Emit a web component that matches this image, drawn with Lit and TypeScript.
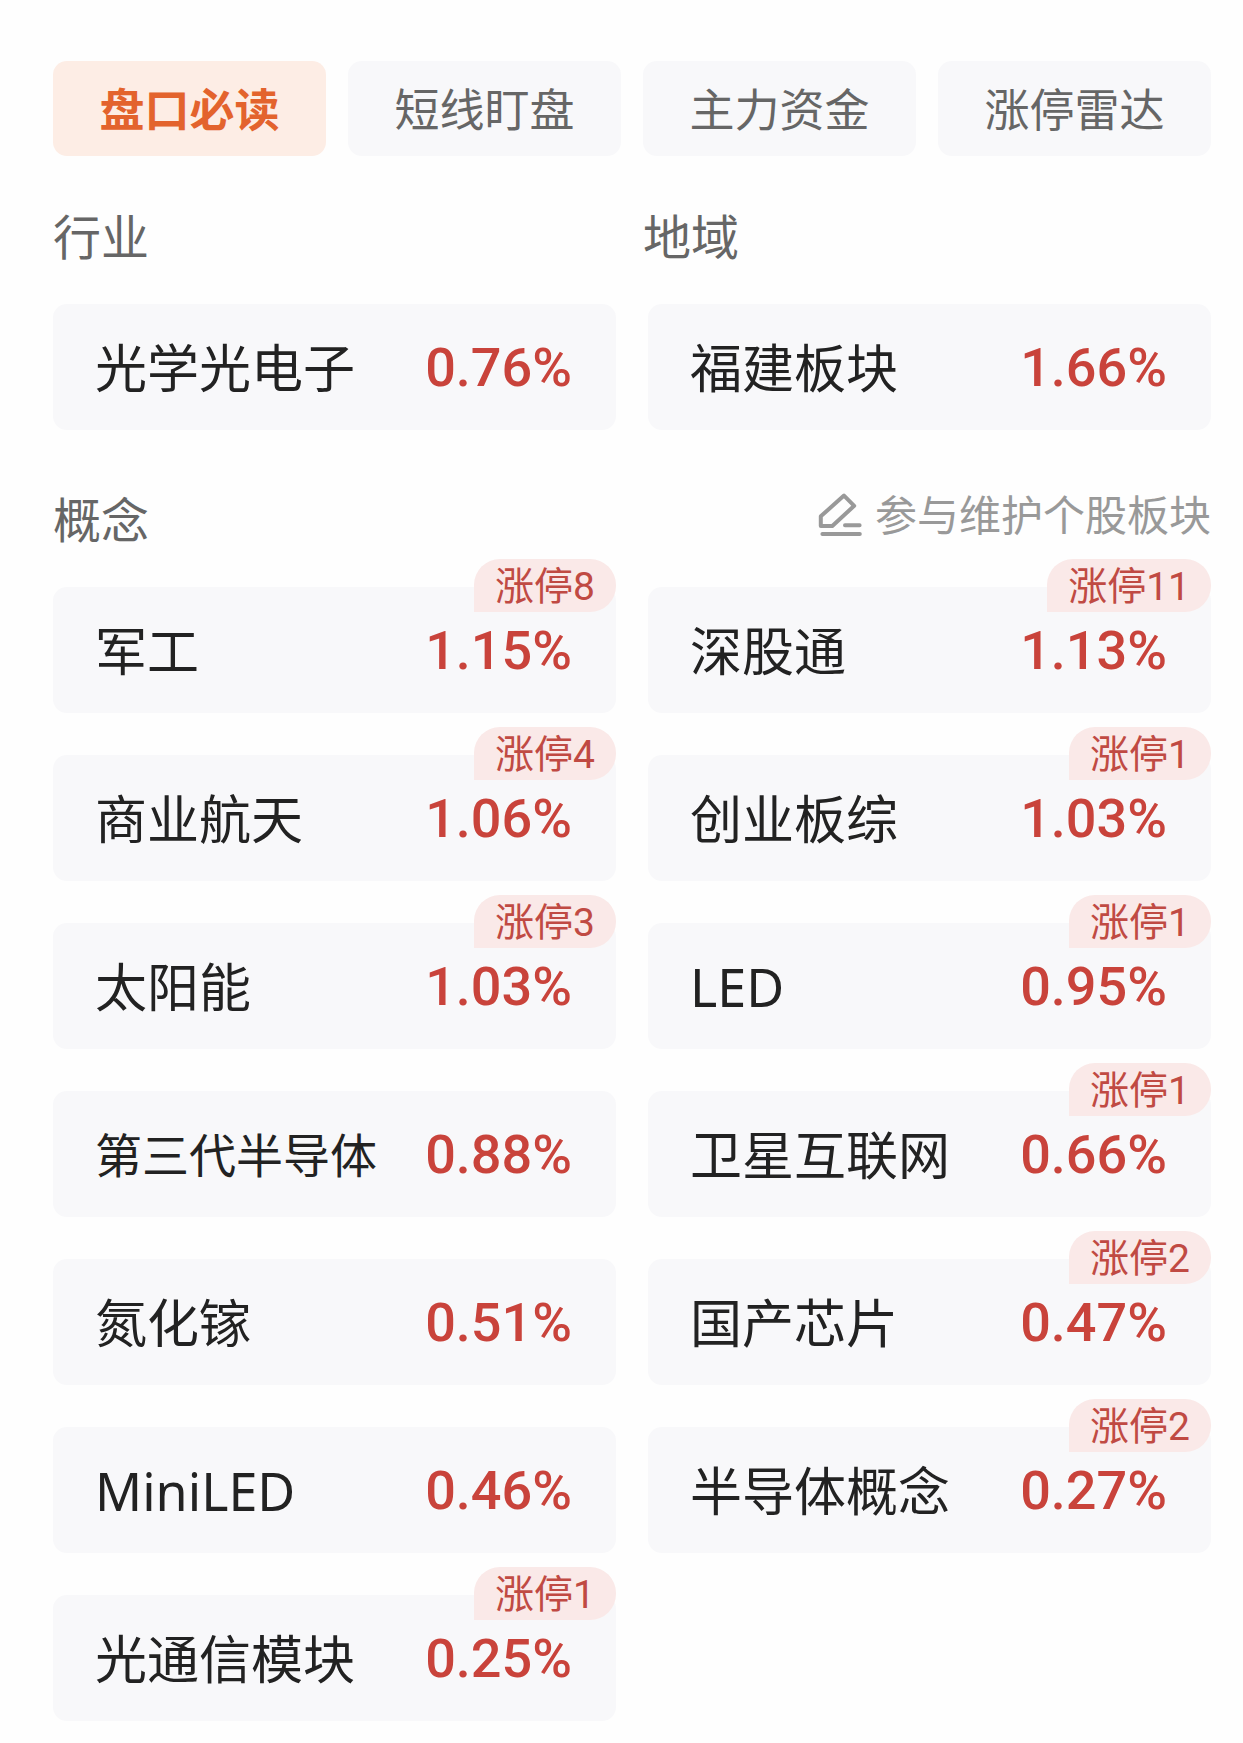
import { LitElement, html, css, nothing } from "lit";
import { customElement, property, state } from "lit/decorators.js";
import { classMap } from "lit/directives/class-map.js";

interface Sector {
  name: string;
  change: string;
  limitUps?: number;
}

const TABS = ["盘口必读", "短线盯盘", "主力资金", "涨停雷达"];

const INDUSTRY: Sector = { name: "光学光电子", change: "0.76%" };
const REGION: Sector = { name: "福建板块", change: "1.66%" };

const CONCEPTS: Sector[] = [
  { name: "军工", change: "1.15%", limitUps: 8 },
  { name: "深股通", change: "1.13%", limitUps: 11 },
  { name: "商业航天", change: "1.06%", limitUps: 4 },
  { name: "创业板综", change: "1.03%", limitUps: 1 },
  { name: "太阳能", change: "1.03%", limitUps: 3 },
  { name: "LED", change: "0.95%", limitUps: 1 },
  { name: "第三代半导体", change: "0.88%" },
  { name: "卫星互联网", change: "0.66%", limitUps: 1 },
  { name: "氮化镓", change: "0.51%" },
  { name: "国产芯片", change: "0.47%", limitUps: 2 },
  { name: "MiniLED", change: "0.46%" },
  { name: "半导体概念", change: "0.27%", limitUps: 2 },
  { name: "光通信模块", change: "0.25%", limitUps: 1 },
];

/** A sector tile: name, daily change and an optional limit-up counter. */
@customElement("sector-card")
export class SectorCard extends LitElement {
  @property({ attribute: false }) sector!: Sector;

  static styles = css`
    :host {
      display: block;
      min-width: 0;
    }
    .card {
      position: relative;
      display: flex;
      align-items: center;
      justify-content: space-between;
      gap: 16px;
      padding: 28px 44px 28px 42px;
      border-radius: 14px;
      background: #f8f8fa;
      color: #222;
      line-height: 68px;
      text-decoration: none;
      white-space: nowrap;
    }
    .name,
    .change {
      padding-top: 2px;
    }
    .name {
      font-size: 52px;
    }
    .name.long {
      font-size: 47px;
    }
    .change {
      font-family: Roboto, "Noto Sans CJK SC", sans-serif;
      font-size: 54px;
      font-weight: 500;
      color: #c9433b;
    }
    .badge {
      position: absolute;
      top: -28px;
      right: 0;
      padding: 4px 21px 0;
      border-radius: 26px 26px 26px 0;
      background: #fae9e8;
      color: #c04a43;
      font-family: Roboto, "Noto Sans CJK SC", sans-serif;
      font-size: 39px;
      line-height: 49px;
    }
  `;

  render() {
    const { name, change, limitUps } = this.sector;
    return html`
      <a class="card" href="#">
        <span class=${classMap({ name: true, long: name.length > 5 && !/^\w+$/.test(name) })}>${name}</span>
        <span class="change">${change}</span>
        ${limitUps ? html`<span class="badge">涨停${limitUps}</span>` : nothing}
      </a>
    `;
  }
}

@customElement("app-root")
export class AppRoot extends LitElement {
  @state() private active = 0;

  static styles = css`
    :host {
      display: block;
      min-height: 100vh;
      box-sizing: border-box;
      padding: 61px 32px 22px 53px;
      background: #fefefe;
      font-family: "Noto Sans", "Noto Sans CJK SC", sans-serif;
    }
    .tabs {
      display: grid;
      grid-template-columns: repeat(4, minmax(0, 1fr));
      gap: 22px;
    }
    .tab {
      margin: 0;
      padding: 3px 0 0;
      border: 0;
      border-radius: 14px;
      background: #f8f8fa;
      color: #666;
      font-family: inherit;
      font-size: 45px;
      line-height: 92px;
      white-space: nowrap;
      cursor: pointer;
    }
    .tab.active {
      background: #fdede5;
      color: #e3632d;
      font-weight: 700;
    }
    .heads {
      display: grid;
      grid-template-columns: repeat(2, minmax(0, 1fr));
      gap: 22px;
      margin: 44px 0 32px;
    }
    .head {
      margin: 0;
      padding-top: 2px;
      font-size: 48px;
      font-weight: 400;
      line-height: 70px;
      color: #666;
    }
    .cards {
      display: grid;
      grid-template-columns: repeat(2, minmax(0, 1fr));
      gap: 42px 32px;
    }
    .bar {
      display: flex;
      align-items: flex-start;
      justify-content: space-between;
      margin: 53px 0 32px;
    }
    .edit {
      display: flex;
      align-items: center;
      gap: 12px;
      color: #999;
      font-size: 42px;
      line-height: 64px;
      text-decoration: none;
      white-space: nowrap;
    }
    .pencil {
      width: 46px;
      height: 46px;
      fill: none;
      stroke: currentColor;
      stroke-width: 4;
      stroke-linecap: round;
      stroke-linejoin: round;
    }
  `;

  render() {
    return html`
      <div class="tabs" role="tablist">
        ${TABS.map(
          (label, i) => html`
            <button
              type="button"
              role="tab"
              class=${classMap({ tab: true, active: i === this.active })}
              aria-selected=${i === this.active ? "true" : "false"}
              @click=${() => (this.active = i)}
            >${label}</button>
          `
        )}
      </div>

      <div class="heads">
        <h2 class="head">行业</h2>
        <h2 class="head">地域</h2>
      </div>
      <div class="cards">
        <sector-card .sector=${INDUSTRY}></sector-card>
        <sector-card .sector=${REGION}></sector-card>
      </div>

      <div class="bar">
        <h2 class="head">概念</h2>
        <a class="edit" href="#">
          <svg class="pencil" viewBox="0 0 46 46" aria-hidden="true">
            <path d="M27 3.6 37.2 13.8 15.3 34H3.8V24.3Z" />
            <path d="M28 33.2H42.6M5.4 42H42.8" />
          </svg>
          参与维护个股板块
        </a>
      </div>
      <div class="cards">
        ${CONCEPTS.map((s) => html`<sector-card .sector=${s}></sector-card>`)}
      </div>
    `;
  }
}
